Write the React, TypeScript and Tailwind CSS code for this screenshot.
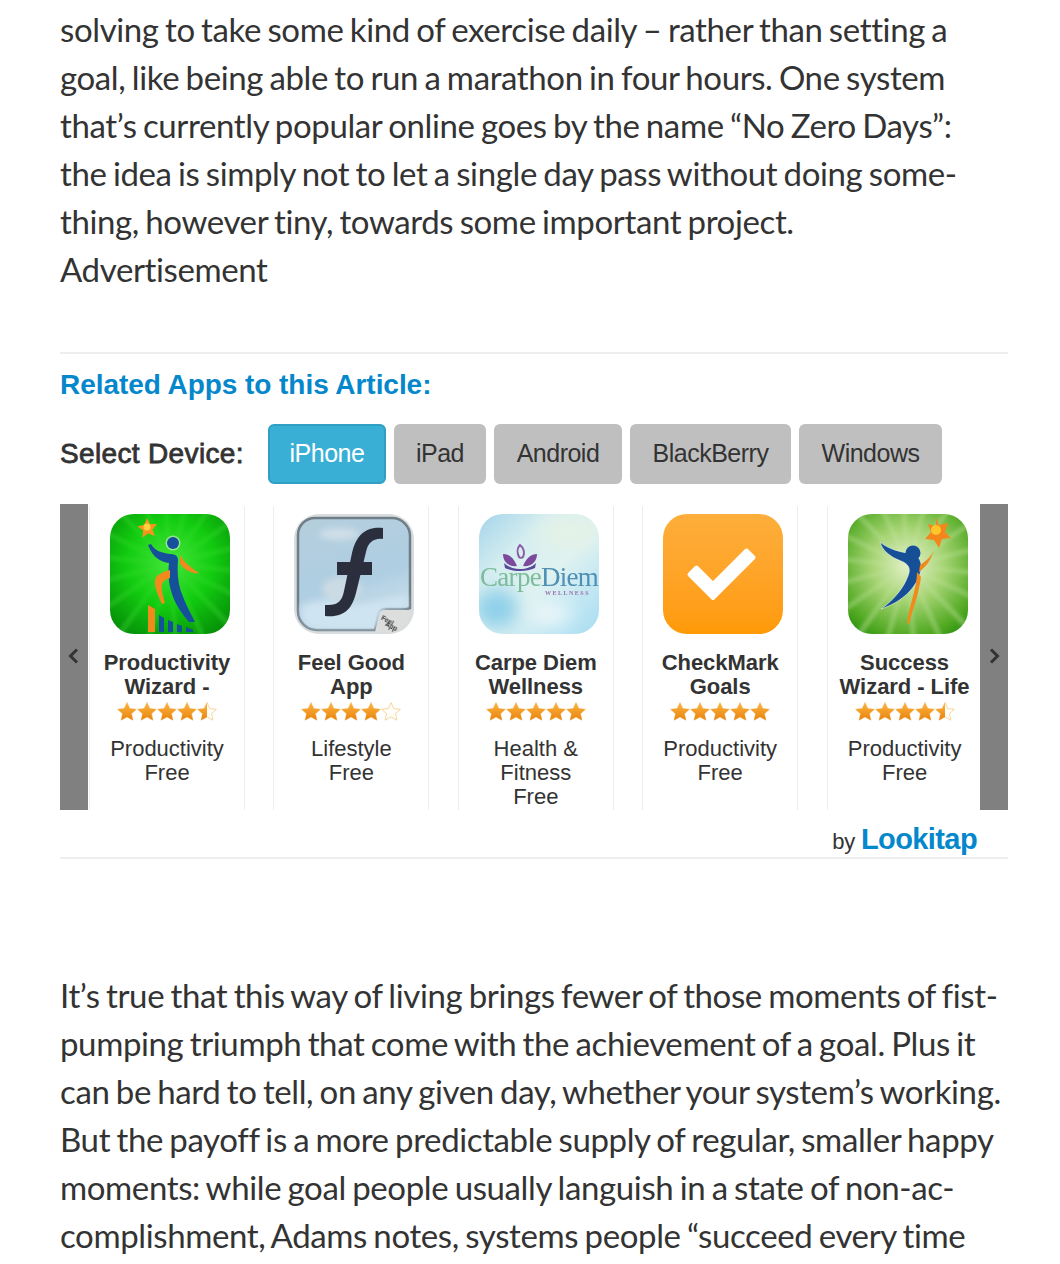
import type { ReactNode } from "react";

const sans = "font-['Liberation_Sans',Arial,sans-serif]";

const topLines = [
  "solving to take some kind of exercise daily – rather than setting a",
  "goal, like being able to run a marathon in four hours. One system",
  "that’s currently popular online goes by the name “No Zero Days”:",
  "the idea is simply not to let a single day pass without doing some-",
  "thing, however tiny, towards some important project.",
  "Advertisement",
];

const bottomLines = [
  "It’s true that this way of living brings fewer of those moments of fist-",
  "pumping triumph that come with the achievement of a goal. Plus it",
  "can be hard to tell, on any given day, whether your system’s working.",
  "But the payoff is a more predictable supply of regular, smaller happy",
  "moments: while goal people usually languish in a state of non-ac-",
  "complishment, Adams notes, systems people “succeed every time",
];

const STAR = "M10 .6l2.800 6 6.600.7-4.900 4.400 1.400 6.500L10 14.900l-5.900 3.300 1.400-6.500L.6 7.300l6.600-.7z";

function Star({ fill, id }: { fill: number; id: string }) {
  return (
    <svg width="20" height="20" viewBox="0 0 20 20" className="block shrink-0">
      <defs>
        <linearGradient id={id} x1="0" y1="0" x2="0" y2="1">
          <stop offset="0" stopColor="#fcb53f" />
          <stop offset="1" stopColor="#e9830f" />
        </linearGradient>
        <clipPath id={`${id}c`}>
          <rect x="0" y="0" width={20 * fill} height="20" />
        </clipPath>
      </defs>
      <path d={STAR} fill="#fffdf8" stroke="#f3c98a" strokeWidth="0.8" />
      <path d={STAR} fill={`url(#${id})`} clipPath={`url(#${id}c)`} />
    </svg>
  );
}

function Stars({ rating, name }: { rating: number; name: string }) {
  return (
    <div className="flex justify-center h-[20px]">
      {[0, 1, 2, 3, 4].map((i) => (
        <Star key={i} id={`${name}${i}`} fill={Math.max(0, Math.min(1, rating - i))} />
      ))}
    </div>
  );
}

function Rays({ cx, cy, color, opacity, id }: { cx: number; cy: number; color: string; opacity: number; id: string }) {
  const rays = Array.from({ length: 18 }, (_, i) => (i * Math.PI * 2) / 18 + 0.1);
  return (
    <g opacity={opacity} filter={`url(#${id})`}>
      <filter id={id}>
        <feGaussianBlur stdDeviation="2" />
      </filter>
      {rays.map((a, i) => (
        <path
          key={i}
          d={`M${cx} ${cy}L${cx + 150 * Math.cos(a - 0.03)} ${cy + 150 * Math.sin(a - 0.03)}L${cx + 150 * Math.cos(a + 0.03)} ${cy + 150 * Math.sin(a + 0.03)}Z`}
          fill={color}
        />
      ))}
    </g>
  );
}

function IconFrame({ children, className = "" }: { children: ReactNode; className?: string }) {
  return <div className={`w-[120px] h-[120px] rounded-[24px] overflow-hidden ml-[6px] ${className}`}>{children}</div>;
}

function ProductivityIcon() {
  return (
    <IconFrame>
      <svg width="120" height="120" viewBox="0 0 120 120" className="block">
        <defs>
          <radialGradient id="pw" cx="0.5" cy="0.4" r="0.72">
            <stop offset="0" stopColor="#45e63a" />
            <stop offset="0.5" stopColor="#12cc10" />
            <stop offset="1" stopColor="#058c08" />
          </radialGradient>
          <filter id="pwb"><feGaussianBlur stdDeviation="0.45" /></filter>
        </defs>
        <rect width="120" height="120" fill="url(#pw)" />
        <Rays cx={60} cy={50} color="#4fe840" opacity={0.4} id="pwr" />
        <g filter="url(#pwb)">
          <path d="M37 4l3.100 6.300 7-.2-4.600 5.300 2.300 6.700-6.600-2.600-5.700 4.100.5-7-5.600-4.200 6.900-1.600z" fill="#f7941e" />
          <circle cx="37" cy="13" r="3.500" fill="#ffd23c" />
          <circle cx="63" cy="29" r="7.500" fill="#d7f4d0" opacity="0.6" />
          <circle cx="63" cy="29" r="6" fill="#14509a" />
          <path d="M41 30c3 6 10 9 19 10 5 0 8 2 8 6-1 12 0 24 4 34 3 9 8 18 13 28l-6 0c-8-9-14-19-17-28-4-12-4-23-3-31-8-1-16-5-21-18z" fill="#14509a" />
          <path d="M70 41c4 7 10 12 19 18l-3 .5c-8-2-13-5-16-10z" fill="#f08a1e" />
          <path d="M60 56c-8 2-14 5-15 10-1 7 3 15 7 24l3-1c-2-7-4-14-3-19 1-3 4-5 8-6z" fill="#f08a1e" />
          <path d="M38 91l7 4v23h-7z" fill="#f08a1e" />
          <path d="M49 101l5 3v14h-5zM58 106l5 2v10h-5zM67 110l5 2v6h-5zM76 113l7 3v2h-7z" fill="#14509a" />
        </g>
      </svg>
    </IconFrame>
  );
}

function FeelGoodIcon() {
  return (
    <div className="ml-[6px]">
      <svg width="120" height="120" viewBox="0 0 120 120" className="block">
        <defs>
          <linearGradient id="fg" x1="0" y1="0" x2="0.3" y2="1">
            <stop offset="0" stopColor="#b5cedd" />
            <stop offset="0.65" stopColor="#afcee2" />
            <stop offset="1" stopColor="#c9deeb" />
          </linearGradient>
          <filter id="fgb"><feGaussianBlur stdDeviation="3" /></filter>
          <filter id="fgs"><feGaussianBlur stdDeviation="0.35" /></filter>
        </defs>
        <rect x="0" y="0" width="120" height="120" rx="25" fill="#d9dcde" />
        <path d="M21 4h77a18 18 0 0 1 18 18v72l-3 1H90a6 6 0 0 0-6 5l-3 16H23A19 19 0 0 1 4 97V21A17 17 0 0 1 21 4z" fill="url(#fg)" stroke="#6f7d87" strokeWidth="2.500" />
        <g filter="url(#fgb)">
          <path d="M7 92c18-6 30-8 40-2 14 5 34-3 65-8v12H90l-8 20H24c-12 0-17-8-17-22z" fill="#cfe4f1" />
          <ellipse cx="45" cy="20" rx="20" ry="6" fill="#cfdfe8" />
          <ellipse cx="48" cy="75" rx="20" ry="12" fill="#cbdbe4" />
        </g>
        <path d="M85 102c1-3 3-6 6-6h25c0 12-8 22-20 22H81z" fill="#dcdddd" />
        <text x="87" y="108" fontSize="6.500" fontFamily="Liberation Sans" fontWeight="700" fill="#333" transform="rotate(28 92 106)" filter="url(#fgs)">Feel</text>
        <text x="91" y="114" fontSize="6.500" fontFamily="Liberation Sans" fontWeight="700" fill="#333" transform="rotate(28 96 112)" filter="url(#fgs)">App</text>
        <g filter="url(#fgs)">
          <path d="M89 14c-18-2-27 8-31 25l-8 38c-2 10-6 14-16 14l-3 0 0 11c20 2 27-8 31-23l10-41c2-9 7-14 17-13z" fill="#2b2f3e" />
          <path d="M43 48h35v13H43z" fill="#2b2f3e" />
        </g>
      </svg>
    </div>
  );
}

function CarpeIcon() {
  return (
    <IconFrame>
      <svg width="120" height="120" viewBox="0 0 120 120" className="block">
        <defs>
          <linearGradient id="cd" x1="0" y1="0" x2="1" y2="1">
            <stop offset="0" stopColor="#a4d4ea" />
            <stop offset="0.3" stopColor="#d6eef0" />
            <stop offset="0.55" stopColor="#dff2f0" />
            <stop offset="0.8" stopColor="#bfe6f3" />
            <stop offset="1" stopColor="#a8dcef" />
          </linearGradient>
          <filter id="soft"><feGaussianBlur stdDeviation="0.5" /></filter>
          <filter id="cloud"><feGaussianBlur stdDeviation="9" /></filter>
        </defs>
        <rect width="120" height="120" fill="url(#cd)" />
        <g filter="url(#cloud)">
          <ellipse cx="18" cy="95" rx="22" ry="20" fill="#8fd0ea" />
          <ellipse cx="90" cy="18" rx="30" ry="16" fill="#e4f2e6" />
          <ellipse cx="70" cy="100" rx="22" ry="10" fill="#eef8fa" />
        </g>
        <g filter="url(#soft)">
          <path d="M41 31c4 3 5 8 3 12-1 1-3 1-4 0-2-4-2-9 1-12z" fill="none" stroke="#8a5ca8" strokeWidth="2" />
          <path d="M24 40c7 0 11 5 14 12-8 1-14-4-14-12zM58 40c-7 0-11 5-14 12 8 1 14-4 14-12z" fill="#7b4a9c" />
          <path d="M25 49c4 4 10 6 16 6 6 0 12-2 16-6l-1 5c-4 2-10 3-15 3s-11-1-15-3z" fill="#5a4a9a" />
          <text x="1" y="72" fontSize="27" fontFamily="Liberation Serif" letterSpacing="-0.7">
            <tspan fill="#7dbb9b">Carpe</tspan>
            <tspan fill="#4f8fb4">Diem</tspan>
          </text>
          <text x="66" y="81" fontSize="6" fontFamily="Liberation Serif" fontWeight="700" fill="#9a6fb0" letterSpacing="1.500">WELLNESS</text>
        </g>
      </svg>
    </IconFrame>
  );
}

function CheckIcon() {
  return (
    <IconFrame className="bg-gradient-to-b from-[#fdae3b] to-[#ff9a05]">
      <svg width="120" height="120" viewBox="0 0 120 120" className="block">
        <polygon
          points="33.500,53.500 50,70 83.500,36.500 90.500,43.500 50,84 26.500,60.500"
          fill="#fff"
          stroke="#fff"
          strokeWidth="4"
          strokeLinejoin="round"
        />
      </svg>
    </IconFrame>
  );
}

function SuccessIcon() {
  return (
    <IconFrame>
      <svg width="120" height="120" viewBox="0 0 120 120" className="block">
        <defs>
          <radialGradient id="sw" cx="0.5" cy="0.42" r="0.75">
            <stop offset="0" stopColor="#e6f2cc" />
            <stop offset="0.4" stopColor="#a6d474" />
            <stop offset="0.8" stopColor="#4fa820" />
            <stop offset="1" stopColor="#1f8a0a" />
          </radialGradient>
          <filter id="swb"><feGaussianBlur stdDeviation="0.4" /></filter>
        </defs>
        <rect width="120" height="120" fill="url(#sw)" />
        <Rays cx={60} cy={52} color="#d7efb8" opacity={0.45} id="swr" />
        <g filter="url(#swb)">
          <path d="M88 3l3 8 9-2-3 9 6 6-9 1-3 9-5-8-9-1 6-7-3-8 8 2z" fill="#f5861f" />
          <circle cx="88" cy="16" r="5" fill="#ffc62a" />
          <path d="M32 28c2 8 10 15 21 19 8 3 10 8 7 15-4 11-13 23-27 33 21-7 36-21 40-39 1-9-2-14-9-16-12-2-24-5-32-12z" fill="#134f96" stroke="#fff" strokeOpacity="0.5" strokeWidth="1" />
          <circle cx="65" cy="39" r="7.500" fill="#134f96" />
          <path d="M86 36c-3 7-8 11-14 15l-1 7c7-5 12-12 15-22z" fill="#f08a1e" />
          <path d="M69 58c0 16-8 34-10 51l2 1c4-15 10-31 12-47z" fill="#f08a1e" />
        </g>
      </svg>
    </IconFrame>
  );
}

const apps = [
  { key: "a", title: ["Productivity", "Wizard -"], rating: 4.5, lines: ["Productivity", "Free"], icon: <ProductivityIcon /> },
  { key: "b", title: ["Feel Good", "App"], rating: 4, lines: ["Lifestyle", "Free"], icon: <FeelGoodIcon /> },
  { key: "c", title: ["Carpe Diem", "Wellness"], rating: 5, lines: ["Health &", "Fitness", "Free"], icon: <CarpeIcon /> },
  { key: "d", title: ["CheckMark", "Goals"], rating: 5, lines: ["Productivity", "Free"], icon: <CheckIcon /> },
  { key: "e", title: ["Success", "Wizard - Life"], rating: 4.5, lines: ["Productivity", "Free"], icon: <SuccessIcon /> },
];

function Article({ lines }: { lines: string[] }) {
  return (
    <div className="font-['Lato',sans-serif] text-[33px] leading-[48px] text-[#333] tracking-[-0.38px] [word-spacing:-1.7px] whitespace-nowrap">
      {lines.map((l) => (
        <div key={l}>{l}</div>
      ))}
    </div>
  );
}

function Arrow({ dir }: { dir: "left" | "right" }) {
  return (
    <div className="w-[28px] bg-[#808080] flex justify-center pt-[142px] shrink-0">
      <svg width="14" height="20" viewBox="0 0 14 20" className="block">
        <path d={dir === "left" ? "M10 3.500L3.500 10 10 16.500" : "M4 3.500L10.500 10 4 16.500"} fill="none" stroke="#333" strokeWidth="3" />
      </svg>
    </div>
  );
}

export default function App() {
  return (
    <div className="w-[1060px] h-[1264px] bg-white overflow-hidden pl-[60px] pr-[52px] pt-[5px] antialiased">
      <Article lines={topLines} />
      <div className={`mt-[59px] border-t-2 border-[#eee] ${sans} text-[#333]`}>
        <h3 className="mt-[16px] text-[28px] leading-[30px] font-bold text-[#0587cc] tracking-[-0.05px]">Related Apps to this Article:</h3>
        <div className="mt-[24px] flex items-center h-[60px]">
          <span className="w-[208px] text-[28px] tracking-[0.35px] [-webkit-text-stroke:0.8px_#333]">Select Device:</span>
          <div className="flex gap-[8px] text-[25px] tracking-[-0.5px]">
            <span className="h-[60px] w-[118px] flex items-center justify-center rounded-[6px] bg-[#39afd5] border-2 border-[#2f9fc4] text-white">iPhone</span>
            {[
              ["iPad", "w-[92px]"],
              ["Android", "w-[128px]"],
              ["BlackBerry", "w-[161px]"],
              ["Windows", "w-[143px]"],
            ].map(([label, w]) => (
              <span key={label} className={`h-[60px] ${w} flex items-center justify-center rounded-[6px] bg-[#bfbfbf]`}>{label}</span>
            ))}
          </div>
        </div>
        <div className="mt-[20px] flex h-[306px]">
          <Arrow dir="left" />
          <div className="flex-1 min-w-0 flex gap-[28.4px] pl-[1px] pt-[2px]">
            {apps.map((app) => (
              <div key={app.key} className="w-[156px] shrink-0 border-x border-[#eee] pt-[8px] text-center text-[22px] leading-[24px]">
                <div className="flex justify-center">{app.icon}</div>
                <div className="mt-[17px] font-bold tracking-[-0.05px]">
                  {app.title.map((t) => (
                    <div key={t}>{t}</div>
                  ))}
                </div>
                <div className="mt-[3px]">
                  <Stars rating={app.rating} name={app.key} />
                </div>
                <div className="mt-[15px]">
                  {app.lines.map((t) => (
                    <div key={t}>{t}</div>
                  ))}
                </div>
              </div>
            ))}
          </div>
          <Arrow dir="right" />
        </div>
        <div className="h-[49px] flex items-baseline justify-end pt-[8px] pr-[31px] border-b-2 border-[#eee]">
          <span className="text-[22px] tracking-[-0.3px] mr-[6px]">by</span>
          <span className="text-[29px] font-bold text-[#0587cc] tracking-[-0.6px]">Lookitap</span>
        </div>
      </div>
      <div className="mt-[112px]">
        <Article lines={bottomLines} />
      </div>
    </div>
  );
}
